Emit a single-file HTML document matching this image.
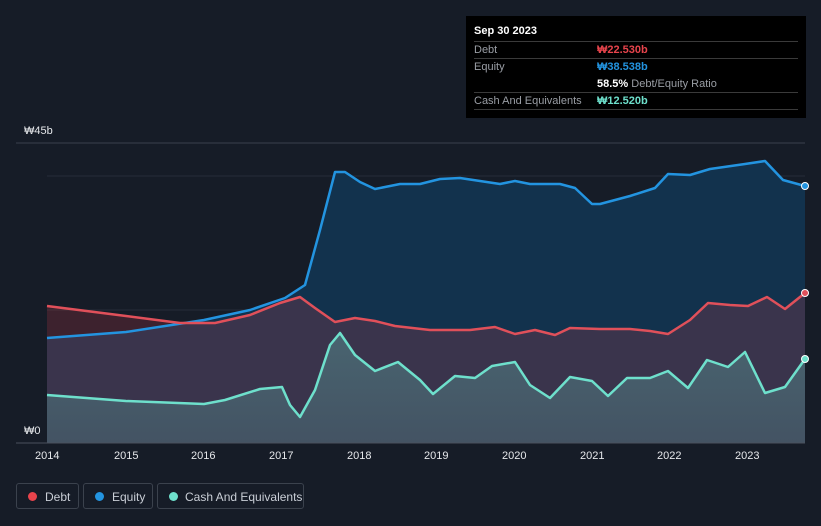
<!DOCTYPE html>
<html><head><meta charset="utf-8"><style>
body{margin:0;width:821px;height:526px;background:#161c27;font-family:"Liberation Sans",sans-serif;overflow:hidden;position:relative}
.tt{position:absolute;left:466px;top:16px;width:340px;height:102px;background:#000;color:#fff;font-size:11px}
.tt .r{position:absolute;left:8px;width:324px;border-top:1px solid #3a3a3a}
.tt span{position:absolute}
.lg{position:absolute;top:483px;height:26px;border:1px solid #3b424d;border-radius:3px;color:#c9ced6;font-size:12px;line-height:26px;box-sizing:border-box}
.lg i{position:absolute;left:11px;top:8px;width:9px;height:9px;border-radius:50%}
.ax{position:absolute;color:#e6e8eb;font-size:11px}
</style></head><body>
<svg width="821" height="526" style="position:absolute;left:0;top:0">
<defs><linearGradient id="cg" x1="0" y1="0" x2="0" y2="1"><stop offset="0" stop-color="#6ee0cc" stop-opacity="0.28"/><stop offset="1" stop-color="#6ee0cc" stop-opacity="0.18"/></linearGradient></defs>
<line x1="16" y1="143" x2="805" y2="143" stroke="#3a414c"/>
<line x1="47" y1="176" x2="805" y2="176" stroke="#262d38"/>
<line x1="47" y1="310" x2="805" y2="310" stroke="#262d38"/>
<polygon fill="#12324d" points="47,443 47,338 126,332 204,320 250,310 285,298 305,285 320,230 335,172 345,172 360,182 375,189 385,187 400,184 420,184 440,179 460,178 480,181 500,184 515,181 530,184 560,184 575,188 592,204 600,204 630,196 655,188 668,174 690,175 710,169 745,164 765,161 783,180 805,186 805,443"/>
<polygon fill="rgba(200,60,75,0.22)" points="47,443 47,306 126,316 180,323 215,323 250,315 280,303 300,297 315,308 335,322 355,318 375,321 395,326 430,330 470,330 495,327 515,334 535,330 555,335 570,328 600,329 630,329 650,331 668,334 690,320 708,303 730,305 748,306 767,297 785,309 805,293 805,443"/>
<polygon fill="url(#cg)" points="47,443 47,395 126,401 204,404 225,400 260,389 282,387 290,405 300,417 315,390 330,345 340,333 355,355 375,371 398,362 420,380 433,394 455,376 475,378 492,366 515,362 530,385 550,398 570,377 592,381 608,396 627,378 650,378 668,371 688,388 707,360 728,367 745,352 765,393 785,387 805,359 805,443"/>
<g fill="none" stroke-width="2.5" stroke-linejoin="round">
<polyline stroke="#2394e0" points="47,338 126,332 204,320 250,310 285,298 305,285 320,230 335,172 345,172 360,182 375,189 385,187 400,184 420,184 440,179 460,178 480,181 500,184 515,181 530,184 560,184 575,188 592,204 600,204 630,196 655,188 668,174 690,175 710,169 745,164 765,161 783,180 805,186"/>
<polyline stroke="#e0505a" points="47,306 126,316 180,323 215,323 250,315 280,303 300,297 315,308 335,322 355,318 375,321 395,326 430,330 470,330 495,327 515,334 535,330 555,335 570,328 600,329 630,329 650,331 668,334 690,320 708,303 730,305 748,306 767,297 785,309 805,293"/>
<polyline stroke="#6ee0cc" points="47,395 126,401 204,404 225,400 260,389 282,387 290,405 300,417 315,390 330,345 340,333 355,355 375,371 398,362 420,380 433,394 455,376 475,378 492,366 515,362 530,385 550,398 570,377 592,381 608,396 627,378 650,378 668,371 688,388 707,360 728,367 745,352 765,393 785,387 805,359"/>
</g>
<circle cx="805" cy="186" r="3.5" fill="#2394e0" stroke="#fff" stroke-width="1"/>
<circle cx="805" cy="293" r="3.5" fill="#e0505a" stroke="#fff" stroke-width="1"/>
<circle cx="805" cy="359" r="3.5" fill="#6ee0cc" stroke="#fff" stroke-width="1"/>
<line x1="16" y1="443" x2="805" y2="443" stroke="#4a515c"/>
</svg>
<div class="ax" style="left:24px;top:125px">₩45b</div>
<div class="ax" style="left:24px;top:425px">₩0</div>
<div class="ax" style="left:35px;top:450px">2014</div>
<div class="ax" style="left:114px;top:450px">2015</div>
<div class="ax" style="left:191px;top:450px">2016</div>
<div class="ax" style="left:269px;top:450px">2017</div>
<div class="ax" style="left:347px;top:450px">2018</div>
<div class="ax" style="left:424px;top:450px">2019</div>
<div class="ax" style="left:502px;top:450px">2020</div>
<div class="ax" style="left:580px;top:450px">2021</div>
<div class="ax" style="left:657px;top:450px">2022</div>
<div class="ax" style="left:735px;top:450px">2023</div>
<div class="tt">
<span style="left:8px;top:9px;font-weight:bold">Sep 30 2023</span>
<div class="r" style="top:25px"></div>
<span style="left:8px;top:28px;color:#9a9ea5">Debt</span><span style="left:131px;top:28px;color:#e8444c;font-weight:bold">₩22.530b</span>
<div class="r" style="top:42px"></div>
<span style="left:8px;top:45px;color:#9a9ea5">Equity</span><span style="left:131px;top:45px;color:#2394e0;font-weight:bold">₩38.538b</span>
<span style="left:131px;top:62px"><b>58.5%</b> <span style="position:static;color:#9a9ea5">Debt/Equity Ratio</span></span>
<div class="r" style="top:76px"></div>
<span style="left:8px;top:79px;color:#9a9ea5">Cash And Equivalents</span><span style="left:131px;top:79px;color:#6ee0cc;font-weight:bold">₩12.520b</span>
<div class="r" style="top:93px"></div>
</div>
<div class="lg" style="left:16px;width:63px"><i style="background:#e8444c"></i><span style="position:absolute;left:28px">Debt</span></div>
<div class="lg" style="left:83px;width:70px"><i style="background:#2394e0"></i><span style="position:absolute;left:28px">Equity</span></div>
<div class="lg" style="left:157px;width:147px"><i style="background:#6ee0cc"></i><span style="position:absolute;left:27px">Cash And Equivalents</span></div>
</body></html>
